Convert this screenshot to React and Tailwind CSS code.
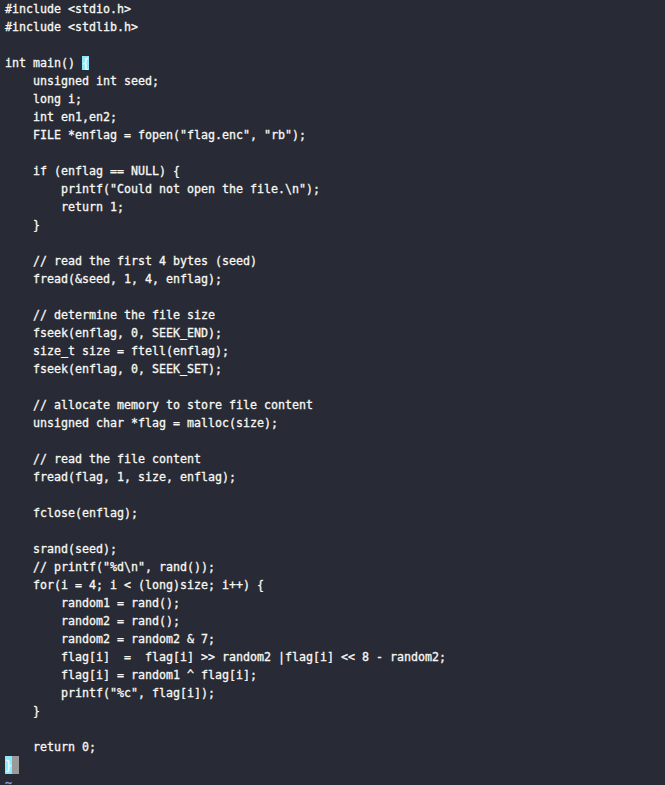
const lines = [
  "#include <stdio.h>",
  "#include <stdlib.h>",
  "",
  null, // int main() {
  "    unsigned int seed;",
  "    long i;",
  "    int en1,en2;",
  '    FILE *enflag = fopen("flag.enc", "rb");',
  "",
  "    if (enflag == NULL) {",
  '        printf("Could not open the file.\\n");',
  "        return 1;",
  "    }",
  "",
  "    // read the first 4 bytes (seed)",
  "    fread(&seed, 1, 4, enflag);",
  "",
  "    // determine the file size",
  "    fseek(enflag, 0, SEEK_END);",
  "    size_t size = ftell(enflag);",
  "    fseek(enflag, 0, SEEK_SET);",
  "",
  "    // allocate memory to store file content",
  "    unsigned char *flag = malloc(size);",
  "",
  "    // read the file content",
  "    fread(flag, 1, size, enflag);",
  "",
  "    fclose(enflag);",
  "",
  "    srand(seed);",
  '    // printf("%d\\n", rand());',
  "    for(i = 4; i < (long)size; i++) {",
  "        random1 = rand();",
  "        random2 = rand();",
  "        random2 = random2 & 7;",
  "        flag[i]  =  flag[i] >> random2 |flag[i] << 8 - random2;",
  "        flag[i] = random1 ^ flag[i];",
  '        printf("%c", flag[i]);',
  "    }",
  "",
  "    return 0;",
];

const App = () => {
  return (
    <div className="min-h-screen w-full bg-[#282a36] overflow-hidden">
      <pre className="pl-[5px] text-[11.63px] leading-[18px] text-[#f8f8f2] font-['DejaVu_Sans_Mono',monospace] whitespace-pre [-webkit-text-stroke:0.3px_#f8f8f2]">
        {lines.map((line, i) =>
          line === null ? (
            <div key={i} className="h-[18px]">
              int main() <span className="bg-[#8be9fd] text-[#f8f8f2]">{"{"}</span>
            </div>
          ) : (
            <div key={i} className="h-[18px]">
              {line}
            </div>
          )
        )}
        {/* closing brace with cursor */}
        <div className="h-[18px] flex">
          <span className="bg-[#8be9fd] text-[#f8f8f2]">{"}"}</span>
          <span className="bg-[#9a9a9a] w-[7px]"> </span>
        </div>
        <div className="h-[18px] text-[#9d9ddb] [-webkit-text-stroke:0.3px_#9d9ddb]">~</div>
      </pre>
    </div>
  );
};

export default App;
